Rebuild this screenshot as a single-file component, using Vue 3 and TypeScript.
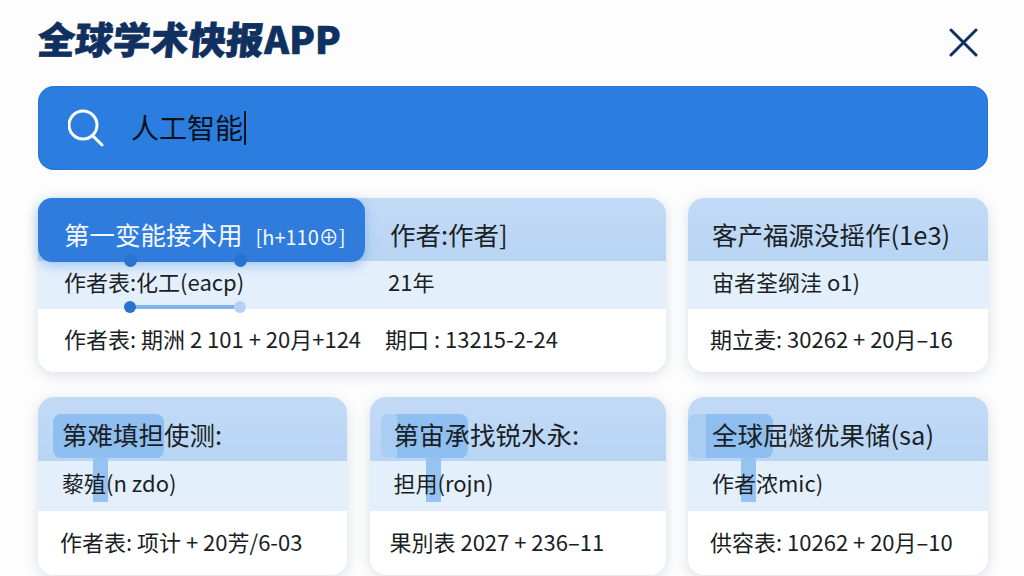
<script setup lang="ts">
interface Mark {
  left: number
  width: number
  fade: number
  stem: number
}

interface Paper {
  title: string
  sub: string
  foot: string
  footInset: number
  mark?: Mark
}

const topRight: Paper = {
  title: '客产福源没摇作(1e3)',
  sub: '宙者荃纲洼 o1)',
  foot: '期立麦: 30262 + 20月–16',
  footInset: 22,
}

const bottomRow: Paper[] = [
  { title: '第难填担使测:', sub: '藜殖(n zdo)', foot: '作者表: 项计 + 20芳/6-03', footInset: 22, mark: { left: 15, width: 111, fade: 0, stem: 55 } },
  { title: '第宙承找锐水永:', sub: '担用(rojn)', foot: '果別表 2027 + 236–11', footInset: 20, mark: { left: 11, width: 87, fade: 16, stem: 56 } },
  { title: '全球屈燧优果储(sa)', sub: '作者浓mic)', foot: '供容表: 10262 + 20月–10', footInset: 22, mark: { left: 0, width: 85, fade: 18, stem: 53 } },
]

function markStyle(mark: Mark) {
  return {
    left: `${mark.left}px`,
    width: `${mark.width}px`,
    background: `linear-gradient(90deg, #aacdf3 ${mark.fade}px, #8fbef0 ${mark.fade}px)`,
  }
}
</script>

<template>
  <div class="page">
    <header class="top">
      <h1 class="top__title"><span class="top__slant">全球学术快报</span>APP</h1>
      <svg class="top__close" width="30" height="30" viewBox="0 0 30 30" fill="none" stroke="#12305f" stroke-width="3" stroke-linecap="round">
        <path d="M3 3 L28 28 M28 3 L3 28" />
      </svg>
    </header>

    <div class="search">
      <svg width="36" height="38" viewBox="0 0 36 38" fill="none" stroke="#fff" stroke-width="3" stroke-linecap="round">
        <circle cx="15" cy="16" r="14" />
        <path d="M25 27 L34 36" />
      </svg>
      <span class="search__text">人工智能</span><span class="search__caret"></span>
    </div>

    <main class="grid">
      <article class="card card--wide">
        <div class="row row--head row--tabbed">
          <div class="tab">第一变能接术用<span class="tab__tag">[h+110⊕]</span></div>
          <span class="cell cell--head">作者:作者]</span>
        </div>
        <div class="row row--sub">
          <span class="col-left">作者表:化工(eacp)</span>
          <span class="cell cell--sub">21年</span>
        </div>
        <div class="row row--foot">
          <span class="col-left">作者表: 期洲 2 101 + 20月+124</span>
          <span class="cell">期口 : 13215-2-24</span>
        </div>
        <span class="dot dot--a"></span>
        <span class="dot dot--b"></span>
        <span class="slider">
          <span class="slider__start"></span>
          <span class="slider__end"></span>
        </span>
      </article>

      <article class="card">
        <div class="row row--head"><span class="plain">{{ topRight.title }}</span></div>
        <div class="row row--sub"><span class="plain">{{ topRight.sub }}</span></div>
        <div class="row row--foot"><span class="plain" :style="{ paddingLeft: topRight.footInset + 'px' }">{{ topRight.foot }}</span></div>
      </article>

      <article v-for="paper in bottomRow" :key="paper.title" class="card card--low">
        <template v-if="paper.mark">
          <span class="mark" :style="markStyle(paper.mark)"></span>
          <span class="mark-stem" :style="{ left: paper.mark.stem + 'px' }"></span>
        </template>
        <div class="row row--head"><span class="plain">{{ paper.title }}</span></div>
        <div class="row row--sub"><span class="plain">{{ paper.sub }}</span></div>
        <div class="row row--foot"><span class="plain" :style="{ paddingLeft: paper.footInset + 'px' }">{{ paper.foot }}</span></div>
      </article>
    </main>
  </div>
</template>

<style>
html,
body {
  margin: 0;
  overflow: hidden;
  background: #fdfdfd;
}
</style>

<style scoped>
.page {
  width: 1024px;
  height: 576px;
  overflow: hidden;
  box-sizing: border-box;
  padding: 16px 36px 0 38px;
  font-family: "Noto Sans CJK SC", "Noto Sans", sans-serif;
  color: #1a1f25;
}

.top {
  display: flex;
  align-items: center;
  justify-content: space-between;
  height: 50px;
  padding-right: 10px;
}

.top__title {
  margin: -6px 0 0;
  font-size: 37.5px;
  line-height: 50px;
  font-weight: 900;
  color: #10305f;
  -webkit-text-stroke: 0.7px #10305f;
  letter-spacing: 0.2px;
}

.top__slant {
  display: inline-block;
  transform: skewX(-5deg);
}

.top__close {
  margin-top: 1px;
}

.search {
  display: flex;
  align-items: center;
  height: 84px;
  margin-top: 20px;
  padding-left: 30px;
  border-radius: 16px;
  background: #2b7de0;
  box-shadow: inset 0 0 0 1px rgba(30, 100, 200, 0.35);
}

.search__text {
  margin-left: 27px;
  padding-bottom: 2px;
  font-size: 28px;
  color: #0c1118;
}

.search__caret {
  width: 2px;
  height: 34px;
  margin-left: 1px;
  background: #10151d;
}

.grid {
  display: grid;
  grid-template-columns: 309px 296px 300px;
  column-gap: 22.5px;
  row-gap: 25px;
  margin-top: 28px;
}

.card {
  position: relative;
  border-radius: 16px;
  background: #fff;
  box-shadow: 0 3px 14px rgba(40, 70, 120, 0.16);
}

.card--wide {
  grid-column: span 2;
}

.row {
  display: flex;
  align-items: center;
  box-sizing: border-box;
  white-space: nowrap;
}

.row--head {
  height: 63px;
  padding-top: 8px;
  border-radius: 16px 16px 0 0;
  background: linear-gradient(180deg, #c2daf6, #b9d5f4);
  font-size: 25.5px;
}

.row--tabbed {
  padding-top: 0;
  align-items: flex-start;
}

.row--sub {
  height: 48px;
  padding-bottom: 8px;
  background: #e4effc;
  font-size: 22px;
}

.row--foot {
  height: 63px;
  padding-bottom: 6px;
  border-radius: 0 0 16px 16px;
  font-size: 22px;
}

.card--low .row--head {
  height: 64px;
  padding-top: 9px;
}

.card--low .row--sub {
  height: 50px;
}

.card--low .row--foot {
  height: 64px;
  padding-bottom: 4px;
}

.plain {
  position: relative;
  z-index: 2;
  padding-left: 24px;
}

.col-left {
  width: 347px;
  padding-left: 26px;
  box-sizing: border-box;
}

.tab {
  flex: none;
  box-sizing: border-box;
  width: 327px;
  height: 64px;
  padding: 8px 0 0 26px;
  line-height: 56px;
  border-radius: 14px;
  background: #2f7cdc;
  color: #f4f8fe;
  white-space: nowrap;
  overflow: hidden;
  box-shadow: 0 4px 12px rgba(47, 124, 220, 0.35);
}

.tab__tag {
  margin-left: 13px;
  font-size: 20px;
}

.cell--head {
  margin-left: 25px;
  padding-top: 8px;
  line-height: 56px;
}

.cell--sub {
  margin-left: 3px;
}

.dot {
  position: absolute;
  top: 56px;
  width: 13px;
  height: 13px;
  border-radius: 50%;
  background: #2a72cf;
}

.dot--a {
  left: 86px;
}

.dot--b {
  left: 196px;
}

.slider {
  position: absolute;
  left: 92px;
  top: 107px;
  width: 110px;
  height: 4px;
  background: #7fb2ee;
}

.slider__start,
.slider__end {
  position: absolute;
  top: -4px;
  width: 12px;
  height: 12px;
  border-radius: 50%;
}

.slider__start {
  left: -6px;
  background: #2a72cf;
}

.slider__end {
  right: -6px;
  background: #b3d2f6;
}

.mark {
  position: absolute;
  z-index: 1;
  top: 17px;
  height: 44px;
  border-radius: 8px;
  filter: blur(0.6px);
}

.mark-stem {
  position: absolute;
  z-index: 1;
  top: 60px;
  width: 15px;
  height: 45px;
  background: #97c3f2;
  filter: blur(0.6px);
}
</style>
